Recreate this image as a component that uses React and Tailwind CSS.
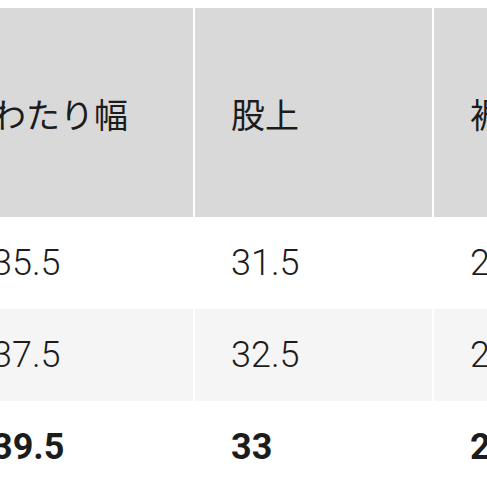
const headers = ["わたり幅", "股上", "裾幅"];

const rows = [
  { values: ["35.5", "31.5", "21.5"], bg: "bg-white", bold: false },
  { values: ["37.5", "32.5", "22"], bg: "bg-[#f5f5f5]", bold: false },
  { values: ["39.5", "33", "22.5"], bg: "bg-white", bold: true },
];

export default function App() {
  return (
    <div className="w-[487px] h-[487px] overflow-hidden bg-white pt-[8px]">
      <div className="-ml-[44px] w-[720px] grid grid-cols-[237px_237px_237px] gap-x-[2px] bg-white">
        {/* header */}
        {headers.map((h) => (
          <div
            key={h}
            className="h-[209px] bg-[#d9d9d9] flex items-center pl-[36px] pt-[1px] text-[34px] text-[#1c1c1c] whitespace-nowrap"
            style={{ fontFamily: '"Noto Sans CJK JP", "Noto Sans", sans-serif' }}
          >
            {h}
          </div>
        ))}

        {/* body */}
        {rows.map((row, i) =>
          row.values.map((v, j) => (
            <div
              key={`${i}-${j}`}
              className={`h-[92px] ${row.bg} flex items-center pl-[36px] text-[36px] text-[#1c1c1c] whitespace-nowrap ${
                row.bold ? "font-bold" : "font-light"
              }`}
              style={{ fontFamily: "Roboto, sans-serif" }}
            >
              {v}
            </div>
          ))
        )}
      </div>
    </div>
  );
}
